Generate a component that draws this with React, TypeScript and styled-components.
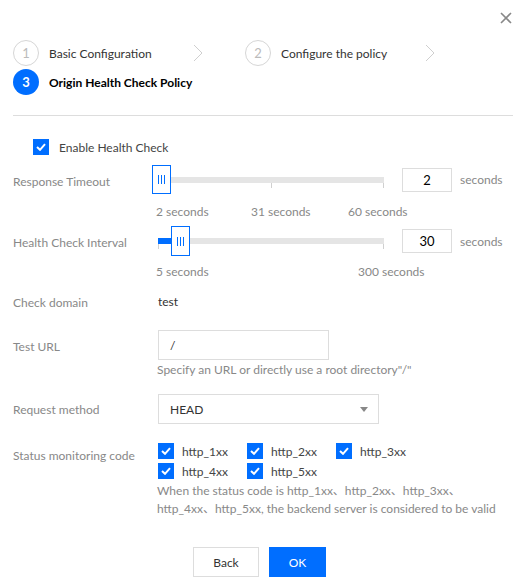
import React from 'react';
import styled, { createGlobalStyle } from 'styled-components';

const Global = createGlobalStyle`
  html, body { margin: 0; padding: 0; background: #fff; }
  body {
    font-family: "Lato", "Noto Sans CJK SC", sans-serif;
    font-size: 12px;
    color: #333;
  }
  * { box-sizing: border-box; }
`;

const BLUE = '#006eff';

const Dialog = styled.div`
  position: relative;
  width: 528px;
  height: 585px;
  padding: 40px 15px 0 13px;
`;

const Close = styled.button`
  position: absolute;
  top: 11px;
  right: 15px;
  width: 14px;
  height: 14px;
  padding: 0;
  border: 0;
  background: none;
  display: flex;
`;

const Steps = styled.div`
  display: flex;
  flex-wrap: wrap;
  row-gap: 3px;
`;

const Step = styled.div`
  width: 232px;
  height: 26px;
  display: flex;
  align-items: center;
`;

const Circle = styled.span<{ $active?: boolean }>`
  width: 26px;
  height: 26px;
  border-radius: 50%;
  flex: 0 0 26px;
  display: flex;
  align-items: center;
  justify-content: center;
  font-size: 13px;
  border: ${(p) => (p.$active ? 'none' : '1px solid #d6d6d6')};
  background: ${(p) => (p.$active ? BLUE : '#fff')};
  color: ${(p) => (p.$active ? '#fff' : '#bbb')};
  font-weight: ${(p) => (p.$active ? 700 : 400)};
`;

const StepLabel = styled.span<{ $active?: boolean }>`
  width: 144px;
  margin-left: 10px;
  white-space: nowrap;
  color: ${(p) => (p.$active ? '#000' : '#333')};
  font-weight: ${(p) => (p.$active ? 700 : 400)};
`;

const Divider = styled.div`
  margin-top: 20px;
  height: 1px;
  background: #ddd;
`;

const CheckRow = styled.label<{ $mt: number; $pl?: number }>`
  display: flex;
  align-items: center;
  gap: 10px;
  margin-top: ${(p) => p.$mt}px;
  padding-left: ${(p) => p.$pl ?? 0}px;
  height: 16px;
  color: #444;
`;

const Box = styled.span`
  width: 16px;
  height: 16px;
  flex: 0 0 16px;
  background: ${BLUE};
  display: flex;
  align-items: center;
  justify-content: center;
`;

const Row = styled.div<{ $mt: number; $align?: string }>`
  display: grid;
  grid-template-columns: 145px 1fr;
  align-items: ${(p) => p.$align ?? 'center'};
  margin-top: ${(p) => p.$mt}px;
`;

const Label = styled.div<{ $pt?: number }>`
  color: #888;
  padding-top: ${(p) => p.$pt ?? 0}px;
  white-space: nowrap;
`;

const Value = styled.div`
  color: #333;
  line-height: 18px;
`;

const Controls = styled.div`
  display: flex;
  align-items: center;
`;

const SliderBox = styled.div<{ $h: number }>`
  position: relative;
  width: 226px;
  height: ${(p) => p.$h}px;
  padding-top: 12px;
`;

const Track = styled.div`
  position: relative;
  height: 6px;
  background: #e5e5e5;
`;

const Fill = styled.div`
  position: absolute;
  left: 0;
  top: 0;
  height: 6px;
  background: ${BLUE};
`;

const Ticks = styled.div`
  position: relative;
  height: 5px;
`;

const Tick = styled.span`
  position: absolute;
  top: 0;
  width: 1px;
  height: 5px;
  background: #d0d0d0;
`;

const Handle = styled.div<{ $h: number }>`
  position: absolute;
  top: 0;
  width: 19px;
  height: ${(p) => p.$h}px;
  border: 1px solid ${BLUE};
  background: #fff;
  display: flex;
  align-items: center;
  justify-content: center;
  gap: 2px;
`;

const Grip = styled.span`
  width: 1px;
  height: 9px;
  background: ${BLUE};
`;

const NumBox = styled.div`
  margin-left: 18px;
  width: 50px;
  height: 24px;
  border: 1px solid #ddd;
  display: flex;
  align-items: center;
  justify-content: center;
  font-size: 13px;
  color: #000;
`;

const Unit = styled.span`
  margin-left: 8px;
  color: #888;
`;

const Scale = styled.div<{ $mt: number }>`
  position: relative;
  margin-top: ${(p) => p.$mt}px;
  margin-left: 143px;
  height: 18px;
  line-height: 18px;
`;

const ScaleLabel = styled.span`
  position: absolute;
  top: 0;
  color: #888;
  white-space: nowrap;
`;

const TextBox = styled.div<{ $w: number }>`
  width: ${(p) => p.$w}px;
  height: 30px;
  border: 1px solid #ddd;
  display: flex;
  align-items: center;
  padding: 0 10px 0 11px;
  color: #333;
  justify-content: space-between;
`;

const Hint = styled.div<{ $mt?: number }>`
  margin-top: ${(p) => p.$mt ?? 0}px;
  margin-left: 144px;
  color: #888;
  line-height: 18px;
  white-space: nowrap;
`;

const Caret = styled.span`
  width: 0;
  height: 0;
  border-left: 4px solid transparent;
  border-right: 4px solid transparent;
  border-top: 5px solid #888;
`;

const CodeGrid = styled.div`
  display: grid;
  grid-template-columns: repeat(3, 89px);
  row-gap: 4px;
`;

const CodeItem = styled.label`
  display: flex;
  align-items: center;
  gap: 8px;
  height: 16px;
  color: #444;
`;

const Actions = styled.div`
  display: flex;
  justify-content: center;
  gap: 10px;
  margin-top: 29px;
  padding-right: 7px;
`;

const Button = styled.button<{ $primary?: boolean }>`
  height: 30px;
  padding: 0;
  width: ${(p) => (p.$primary ? 57 : 66)}px;
  font-family: inherit;
  font-size: 12px;
  border: 1px solid ${(p) => (p.$primary ? BLUE : '#ddd')};
  background: ${(p) => (p.$primary ? BLUE : '#fff')};
  color: ${(p) => (p.$primary ? '#fff' : '#333')};
`;

const Check = () => (
  <Box>
    <svg width="10" height="8" viewBox="0 0 10 8">
      <path d="M1 4 L4 6.8 L9 1.2" fill="none" stroke="#fff" strokeWidth="2" />
    </svg>
  </Box>
);

const Chevron = () => (
  <svg width="10" height="18" viewBox="0 0 10 18">
    <path d="M1 1 L9 9 L1 17" fill="none" stroke="#cfcfcf" strokeWidth="1" />
  </svg>
);

type SliderProps = { frac: number; h: number; ticks: number[]; fill?: boolean };
const W = 226;
const Slider = ({ frac, h, ticks, fill }: SliderProps) => (
  <SliderBox $h={h}>
    <Track>{fill && <Fill style={{ width: frac * W + 6 }} />}</Track>
    <Ticks>
      {ticks.map((t) => (
        <Tick key={t} style={{ left: Math.min(t * W, W - 1) }} />
      ))}
    </Ticks>
    <Handle $h={h} style={{ left: frac * W - 6 }}>
      <Grip />
      <Grip />
      <Grip />
    </Handle>
  </SliderBox>
);

export default function App() {
  return (
    <>
      <Global />
      <Dialog>
        <Close aria-label="close">
          <svg width="14" height="14" viewBox="0 0 14 14">
            <path d="M2 2 L12 12 M12 2 L2 12" stroke="#888" strokeWidth="1.6" />
          </svg>
        </Close>
        <Steps>
          <Step>
            <Circle>1</Circle>
            <StepLabel>Basic Configuration</StepLabel>
            <Chevron />
          </Step>
          <Step>
            <Circle>2</Circle>
            <StepLabel>Configure the policy</StepLabel>
            <Chevron />
          </Step>
          <Step>
            <Circle $active>3</Circle>
            <StepLabel $active>Origin Health Check Policy</StepLabel>
          </Step>
        </Steps>
        <Divider />

        <CheckRow $mt={23} $pl={20}>
          <Check />
          Enable Health Check
        </CheckRow>

        <Row $mt={10}>
          <Label $pt={3}>Response Timeout</Label>
          <Controls>
            <Slider frac={0} h={29} ticks={[0, 0.5, 1]} />
            <NumBox>2</NumBox>
            <Unit>seconds</Unit>
          </Controls>
        </Row>
        <Scale $mt={9}>
          <ScaleLabel style={{ left: 0 }}>2 seconds</ScaleLabel>
          <ScaleLabel style={{ left: 95 }}>31 seconds</ScaleLabel>
          <ScaleLabel style={{ left: 192 }}>60 seconds</ScaleLabel>
        </Scale>

        <Row $mt={5}>
          <Label $pt={3}>Health Check Interval</Label>
          <Controls>
            <Slider frac={25 / 295} h={30} ticks={[0, 1]} fill />
            <NumBox>30</NumBox>
            <Unit>seconds</Unit>
          </Controls>
        </Row>
        <Scale $mt={7}>
          <ScaleLabel style={{ left: 0 }}>5 seconds</ScaleLabel>
          <ScaleLabel style={{ left: 202 }}>300 seconds</ScaleLabel>
        </Scale>

        <Row $mt={12}>
          <Label>Check domain</Label>
          <Value>test</Value>
        </Row>

        <Row $mt={19}>
          <Label $pt={2}>Test URL</Label>
          <TextBox $w={171}>/</TextBox>
        </Row>
        <Hint $mt={1}>Specify an URL or directly use a root directory"/"</Hint>

        <Row $mt={15}>
          <Label $pt={1}>Request method</Label>
          <TextBox $w={221}>
            HEAD
            <Caret />
          </TextBox>
        </Row>

        <Row $mt={19} $align="start">
          <Label $pt={5}>Status monitoring code</Label>
          <CodeGrid>
            {['http_1xx', 'http_2xx', 'http_3xx', 'http_4xx', 'http_5xx'].map((c) => (
              <CodeItem key={c}>
                <Check />
                {c}
              </CodeItem>
            ))}
          </CodeGrid>
        </Row>
        <Hint $mt={3}>
          When the status code is http_1xx、http_2xx、http_3xx、
          <br />
          http_4xx、http_5xx, the backend server is considered to be valid
        </Hint>

        <Actions>
          <Button>Back</Button>
          <Button $primary>OK</Button>
        </Actions>
      </Dialog>
    </>
  );
}
